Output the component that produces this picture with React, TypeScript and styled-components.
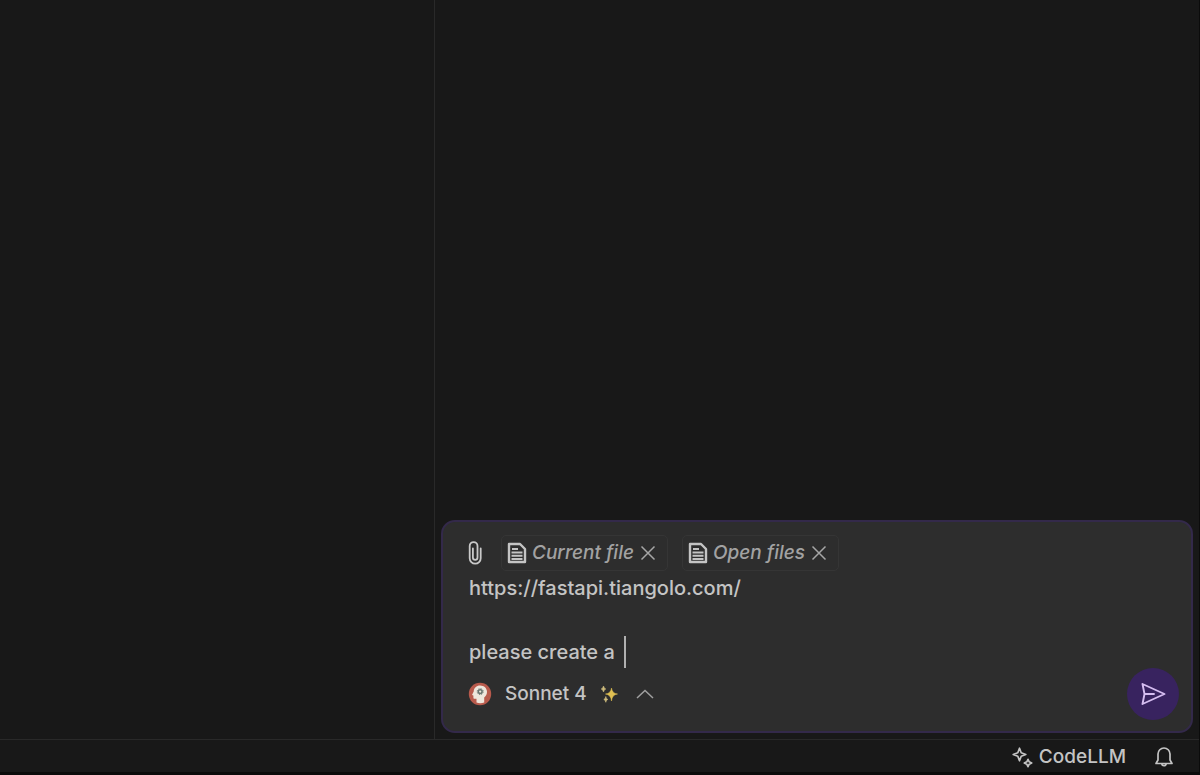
import React, { useState } from "react";
import styled, { createGlobalStyle } from "styled-components";

const GlobalStyle = createGlobalStyle`
  * { box-sizing: border-box; }
  body { margin: 0; background: #0b0b0b; }
  button, textarea { font: inherit; color: inherit; }
`;

const Window = styled.div`
  display: flex;
  flex-direction: column;
  min-height: 100vh;
  padding: 0 1px 3px 0;
  font-family: Inter, "Liberation Sans", sans-serif;
  font-size: 19px;
  font-weight: 500;
  color: #c4c4c4;
`;

const Workspace = styled.div`
  display: flex;
  flex: 1;
  background: #181818;
`;

const EditorPane = styled.main`
  flex: 0 0 435px;
  border-right: 1px solid #292929;
`;

const ChatPane = styled.section`
  display: flex;
  flex: 1;
  flex-direction: column;
  justify-content: flex-end;
  min-width: 0;
  padding: 6px;
`;

const Composer = styled.form`
  display: flex;
  flex-direction: column;
  padding: 13px 12px 11px 26px;
  border: 2px solid #33294a;
  border-radius: 14px;
  background: #2d2d2d;
`;

const ContextRow = styled.div`
  display: flex;
  align-items: center;
  gap: 14px;
`;

const IconButton = styled.button`
  display: flex;
  align-items: center;
  justify-content: center;
  padding: 0;
  border: 0;
  background: none;
`;

const AttachButton = styled(IconButton)`
  width: 20px;
  height: 36px;
  margin: 0 2px 0 -4px;
`;

const Chip = styled.div`
  display: flex;
  align-items: center;
  height: 36px;
  padding: 0 11px 0 5px;
  border: 1px solid #353535;
  border-radius: 5px;
  color: #a2a2a2;
`;

const ChipLabel = styled.span`
  margin: 0 6px 0 5px;
  font-style: italic;
  line-height: 24px;
  white-space: nowrap;
`;

const PromptArea = styled.div`
  position: relative;
  display: flex;
  margin-top: 1px;
`;

const Prompt = styled.textarea`
  flex: 1;
  min-width: 0;
  padding: 0;
  border: 0;
  outline: 0;
  resize: none;
  overflow: hidden;
  background: none;
  font-size: 20px;
  line-height: 32px;
`;

const Caret = styled.span`
  position: absolute;
  bottom: 0;
  left: 155px;
  width: 2px;
  height: 32px;
  background: #b0b0b0;
`;

const Footer = styled.div`
  display: flex;
  align-items: center;
  justify-content: space-between;
`;

const ModelButton = styled(IconButton)`
  gap: 13px;
  margin-left: -1px;
  line-height: 24px;
`;

const ModelBadges = styled.span`
  display: flex;
  align-items: center;
  gap: 16px;
`;

const SendButton = styled(IconButton)`
  width: 52px;
  height: 52px;
  border-radius: 50%;
  background: #38235f;
  color: #d5bdf0;
`;

const StatusBar = styled.footer`
  display: flex;
  align-items: center;
  justify-content: flex-end;
  gap: 29px;
  height: 33px;
  padding: 2px 26px 0 0;
  border-top: 1px solid #292929;
  background: #181818;
`;

const StatusButton = styled(IconButton)`
  gap: 6px;
  line-height: 24px;
`;

const FileIcon = () => (
  <svg width="20" height="22" viewBox="0 0 20 22" fill="none" aria-hidden="true">
    <path d="M2 2h11l5 5v13H2z" stroke="#c4c4c4" strokeWidth="2.4" strokeLinejoin="round" />
    <path d="M5 7h6M4.5 10.5h11M4.5 13.7h11M4.5 16.9h11" stroke="#c4c4c4" strokeWidth="2" />
  </svg>
);

const CloseIcon = () => (
  <svg width="16" height="16" viewBox="0 0 16 16" fill="none" stroke="#a6a6a6" strokeWidth="1.5" aria-hidden="true">
    <path d="M1.5 1.5l13 13M14.5 1.5l-13 13" />
  </svg>
);

const ClipIcon = () => (
  <svg width="16" height="26" viewBox="0 0 16 26" fill="none" stroke="#c9c9c9" strokeWidth="1.8" strokeLinecap="round" aria-hidden="true">
    <path d="M13.7 8.5v9.700a5.500 5.500 0 0 1-11 0V6a3.900 3.900 0 0 1 7.800 0v11.500a2.300 2.300 0 0 1-4.600 0V8.500" />
  </svg>
);

const ModelIcon = () => (
  <svg width="24" height="24" viewBox="0 0 24 24" aria-hidden="true">
    <circle cx="12" cy="12" r="11.2" fill="#b85a4c" />
    <path d="M8.500 20.500v-3.700H6.600c-.9 0-1.200-.5-1.200-1.300v-1.900l-1.400-.7 1.700-3.300C5.900 5.700 8.500 3.400 12 3.400c4.200 0 7 2.800 7 6.400 0 2.500-1 4.300-2.800 5.800v4.900c-2.300 1-5.400 1-7.700 0z" fill="#eee6dc" />
    <circle cx="12.200" cy="9.600" r="1.900" fill="none" stroke="#68746e" strokeWidth="1.500" />
    <circle cx="12.200" cy="9.600" r="3" fill="none" stroke="#68746e" strokeWidth="1" strokeDasharray="1.200 1.156" />
  </svg>
);

const ModelSparkles = () => (
  <svg width="20" height="20" viewBox="0 0 20 20" aria-hidden="true">
    <path d="M11.500 4q.6 5.400 6 6-5.400.6-6 7-.6-6.400-6-7 5.400-.6 6-6z" fill="#e0c052" stroke="#e0c052" strokeWidth=".5" />
    <path d="M3.500 2q.4 2.500 2.300 3-1.900.5-2.300 3-.4-2.500-2.300-3 1.900-.5 2.300-3zM5.800 12.500q.3 2.400 2 2.900-1.700.5-2 2.900-.3-2.400-2-2.900 1.700-.5 2-2.900z" fill="#cdbb7c" stroke="#cdbb7c" strokeWidth=".6" />
  </svg>
);

const ChevronUp = () => (
  <svg width="18" height="10" viewBox="0 0 18 10" fill="none" stroke="#a0a0a0" strokeWidth="1.500" aria-hidden="true">
    <path d="M1 9l8-7.500L17 9" />
  </svg>
);

const SendIcon = () => (
  <svg width="26" height="24" viewBox="0 0 26 24" fill="none" stroke="currentColor" strokeWidth="1.9" strokeLinejoin="round" strokeLinecap="round" aria-hidden="true">
    <path d="M2.500 2l22 10-22 10 2-10zM4.500 12h9.500" />
  </svg>
);

const AssistantIcon = () => (
  <svg width="21" height="21" viewBox="0 0 21 21" fill="none" stroke="#c4c4c4" strokeWidth="1.700" strokeLinejoin="round" aria-hidden="true">
    <path d="M7.500 1.200l1.700 4.600 4.600 1.700-4.600 1.700-1.700 4.600-1.700-4.600L1.200 7.500l4.600-1.700z" />
    <path d="M16 12.300l1.200 2.500 2.500 1.200-2.500 1.200-1.200 2.500-1.200-2.500-2.500-1.200 2.500-1.200z" />
  </svg>
);

const BellIcon = () => (
  <svg width="18" height="22" viewBox="0 0 18 22" fill="none" stroke="#c4c4c4" strokeWidth="1.700" strokeLinejoin="round" aria-hidden="true">
    <path d="M3 14V8a6 6 0 0 1 12 0v6l2 3.500H1zM6.800 17.500a2.200 2.200 0 0 0 4.400 0" />
  </svg>
);

export default function App() {
  const [prompt, setPrompt] = useState("https://fastapi.tiangolo.com/\n\nplease create a ");
  const [files, setFiles] = useState(["Current file", "Open files"]);

  return (
    <>
      <GlobalStyle />
      <Window>
        <Workspace>
          <EditorPane />
          <ChatPane>
            <Composer onSubmit={(event) => event.preventDefault()}>
              <ContextRow>
                <AttachButton type="button" aria-label="Attach">
                  <ClipIcon />
                </AttachButton>
                {files.map((file) => (
                  <Chip key={file}>
                    <FileIcon />
                    <ChipLabel>{file}</ChipLabel>
                    <IconButton
                      type="button"
                      aria-label={`Remove ${file}`}
                      onClick={() => setFiles(files.filter((name) => name !== file))}
                    >
                      <CloseIcon />
                    </IconButton>
                  </Chip>
                ))}
              </ContextRow>
              <PromptArea>
                <Prompt
                  aria-label="Message"
                  rows={3}
                  spellCheck={false}
                  value={prompt}
                  onChange={(event) => setPrompt(event.target.value)}
                />
                <Caret />
              </PromptArea>
              <Footer>
                <ModelButton type="button" aria-haspopup="listbox">
                  <ModelIcon />
                  Sonnet 4
                  <ModelBadges>
                    <ModelSparkles />
                    <ChevronUp />
                  </ModelBadges>
                </ModelButton>
                <SendButton type="submit" aria-label="Send">
                  <SendIcon />
                </SendButton>
              </Footer>
            </Composer>
          </ChatPane>
        </Workspace>
        <StatusBar>
          <StatusButton type="button">
            <AssistantIcon />
            CodeLLM
          </StatusButton>
          <StatusButton type="button" aria-label="Notifications">
            <BellIcon />
          </StatusButton>
        </StatusBar>
      </Window>
    </>
  );
}
